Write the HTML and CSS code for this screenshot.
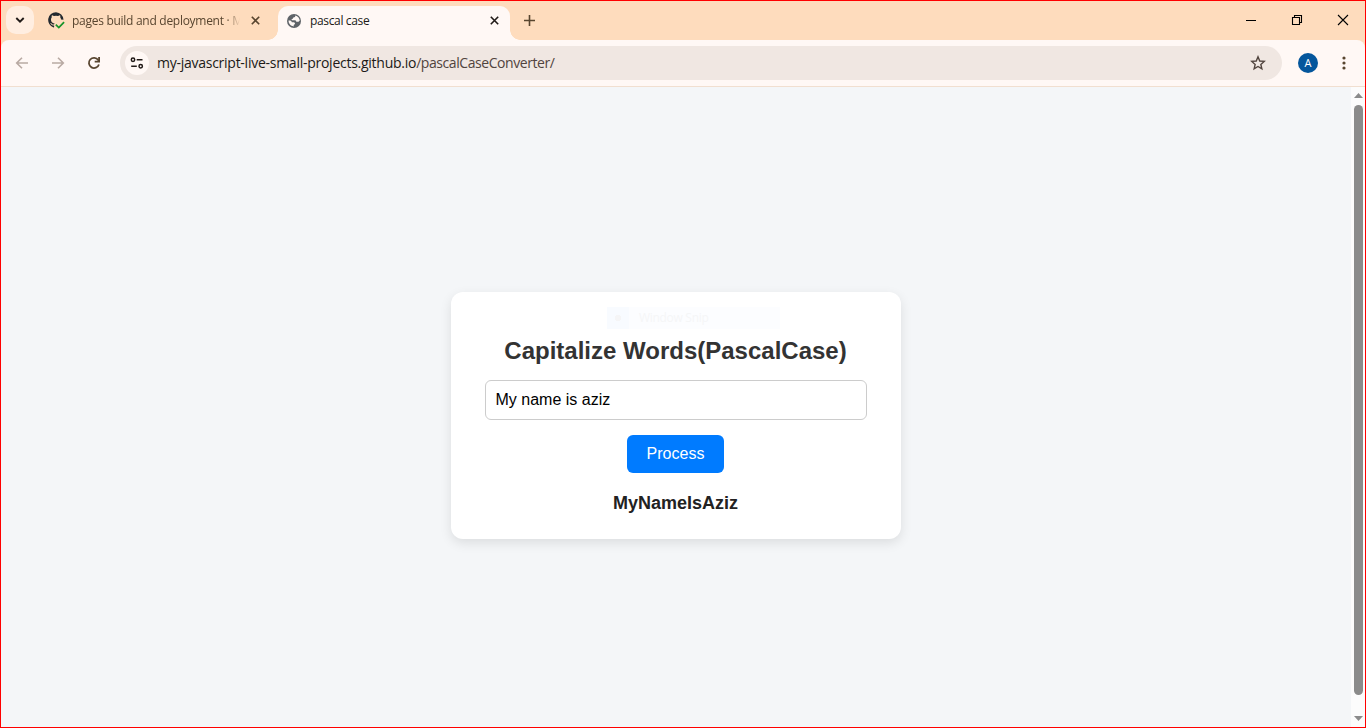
FILE: index.html
```html
<!DOCTYPE html>
<html lang="en">
<head>
<meta charset="utf-8">
<title>pascal case</title>
<link rel="stylesheet" href="styles.css">
</head>
<body>
<div class="window">
  <header class="tabstrip">
    <button class="tab-search" aria-label="Search tabs">
      <svg width="10" height="6" viewBox="0 0 10 6"><path d="M1.3 1 5 4.6 8.7 1" fill="none" stroke="#201a17" stroke-width="1.9"/></svg>
    </button>
    <div class="tab tab-idle">
      <svg class="favicon" width="17" height="17" viewBox="0 0 17 17">
        <path d="M8 .2a7.8 7.8 0 0 0-2.5 15.2c.4.1.6-.2.6-.4v-1.5c-2.200.5-2.700-.9-2.700-.9-.4-.9-.9-1.200-.9-1.200-.7-.5.1-.5.1-.5.8.1 1.200.8 1.200.8.7 1.200 1.900.9 2.300.7.1-.5.3-.9.5-1.100-1.700-.2-3.600-.9-3.600-3.900 0-.9.300-1.600.8-2.100-.1-.2-.3-1 .1-2.100 0 0 .7-.2 2.100.8a7.500 7.500 0 0 1 4 0c1.500-1 2.100-.8 2.100-.8.4 1.100.2 1.900.1 2.100.5.5.8 1.200.8 2.100l2.500.3A7.800 7.800 0 0 0 8 .2z" fill="#24292f"/>
        <path d="M7.800 12.600l3 3 5.300-5.500" fill="none" stroke="#159328" stroke-width="1.700"/>
      </svg>
      <span class="tab-title title-idle">pages build and deployment · M</span>
      <svg class="close" width="9" height="9" viewBox="0 0 9 9"><path d="M.8.8l7.400 7.400M8.200.8.800 8.200" stroke="#58452f" stroke-width="1.600"/></svg>
    </div>
    <div class="tab tab-active">
      <svg class="favicon" width="14" height="14" viewBox="0 0 14 14">
        <circle cx="7" cy="7" r="7" fill="#5f6368"/>
        <path d="M8.200 1.500C8.600 3 7.600 3.200 6.500 3.500c-.6.200-.3 1.300-1.300 1.500-1 .1-.7.900-.2 1.300h3.200c.9.1.6 1.300 1.400 1.500h1.200c.9 0 1.200-.8 1.900-.8.100-2.600-1.700-4.900-4.500-5.500zM1.500 6.600c0 3 2.200 5.600 5.200 5.800v-1.100c0-.8 1.300-.6 1.300-1.500 0-1.200-1-1.500-2-1.500H4.900C4.600 7 3.600 6.600 1.500 6.600z" fill="#fff8f5"/>
      </svg>
      <span class="tab-title title-active">pascal case</span>
      <svg class="close" width="9" height="9" viewBox="0 0 9 9"><path d="M.8.8l7.400 7.400M8.200.8.800 8.200" stroke="#201a17" stroke-width="1.600"/></svg>
    </div>
    <svg class="new-tab" width="11" height="11" viewBox="0 0 11 11"><path d="M5.500 0v11M0 5.500h11" stroke="#58452f" stroke-width="1.600"/></svg>
    <div class="controls">
      <svg width="46" height="38" viewBox="0 0 46 38"><path d="M18 19.500h10" stroke="#000"/></svg>
      <svg width="46" height="38" viewBox="0 0 46 38"><path d="M18.500 16.500h7v7h-7zM20.500 16.500v-2h7v7h-2" fill="none" stroke="#000" stroke-width="1.100"/></svg>
      <svg width="45" height="38" viewBox="0 0 45 38"><path d="M18 14l10 10M28 14 18 24" stroke="#000" stroke-width="1.100"/></svg>
    </div>
  </header>

  <nav class="toolbar">
    <svg class="nav-icon" width="16" height="16" viewBox="0 0 16 16"><path d="M14 8H3M8 2.700 2.700 8 8 13.300" fill="none" stroke="#b9aaa3" stroke-width="1.600"/></svg>
    <svg class="nav-icon" width="16" height="16" viewBox="0 0 16 16"><path d="M2 8h11M8 2.700 13.300 8 8 13.300" fill="none" stroke="#b9aaa3" stroke-width="1.600"/></svg>
    <svg class="nav-icon" width="16" height="16" viewBox="0 0 16 16"><path d="M12.900 9.400A5.100 5.100 0 1 1 12.200 5L13 6" fill="none" stroke="#58452f" stroke-width="1.800"/><path d="M14 2v5.400H8.700V5.700h3.500V2z" fill="#58452f"/></svg>
    <div class="omnibox">
      <span class="site-info">
        <svg width="14" height="12" viewBox="0 0 14 12" fill="none" stroke="#201a17" stroke-width="1.500"><circle cx="3" cy="2.800" r="1.700"/><path d="M6.700 2.800h5.800M1.200 9.200h5.600"/><circle cx="10.700" cy="9.200" r="1.700"/></svg>
      </span>
      <span class="url">my-javascript-live-small-projects.github.io<span class="path">/pascalCaseConverter/</span></span>
      <svg class="star" width="16" height="16" viewBox="0 0 16 16"><path d="M8 1.800l1.750 4.200 4.500.4-3.400 3 1 4.400L8 11.500l-3.850 2.300 1-4.400-3.400-3 4.500-.4z" fill="none" stroke="#51443e" stroke-width="1.400"/></svg>
    </div>
    <span class="avatar">A</span>
    <svg class="menu" width="4" height="14" viewBox="0 0 4 14" fill="#58452f"><circle cx="2" cy="2" r="1.600"/><circle cx="2" cy="7" r="1.600"/><circle cx="2" cy="12" r="1.600"/></svg>
  </nav>

  <div class="viewport">
    <main class="page">
      <section class="card">
        <div class="snip"><span class="snip-icon"></span><span class="snip-label">Window Snip</span></div>
        <h1 class="title">Capitalize Words(PascalCase)</h1>
        <input class="field" type="text" value="My name is aziz">
        <button class="process">Process</button>
        <p class="result">MyNameIsAziz</p>
      </section>
    </main>
    <div class="scrollbar">
      <svg width="9" height="5" viewBox="0 0 9 5"><path d="M0 5 4.500 0 9 5z" fill="#8b8b8b"/></svg>
      <div class="thumb"></div>
      <svg width="9" height="5" viewBox="0 0 9 5"><path d="M0 0l4.500 5L9 0z" fill="#8b8b8b"/></svg>
    </div>
  </div>
</div>
</body>
</html>
```
FILE: styles.css
```css
* { box-sizing: border-box; }
body { margin: 0; overflow: hidden; }
svg { display: block; flex: none; }
button { border: 0; padding: 0; }

.window {
  width: 1366px;
  height: 728px;
  border: 1px solid #f00;
  display: flex;
  flex-direction: column;
  background: #fedcbd;
  font-family: "Open Sans", "Noto Sans", sans-serif;
}

.tabstrip { height: 39px; flex: none; display: flex; align-items: flex-start; padding-left: 5px; }
.tab-search {
  width: 28px;
  height: 28px;
  margin-top: 5px;
  border-radius: 10px;
  background: #ffeee1;
  display: flex;
  align-items: center;
  justify-content: center;
}
.tab { display: flex; align-items: center; height: 34px; margin-top: 5px; padding-bottom: 5px; }
.tab-idle { width: 244px; padding-left: 14px; }
.tab-active {
  position: relative;
  width: 232px;
  padding-left: 9px;
  background: #fff8f5;
  border-radius: 10px 10px 0 0;
}
.tab-active::before,
.tab-active::after {
  content: "";
  position: absolute;
  bottom: 0;
  width: 10px;
  height: 10px;
}
.tab-active::before { left: -10px; background: radial-gradient(circle at 0 0, transparent 9.500px, #fff8f5 10px); }
.tab-active::after { right: -10px; background: radial-gradient(circle at 100% 0, transparent 9.500px, #fff8f5 10px); }
.tab-title { font-size: 12px; line-height: 18px; white-space: nowrap; overflow: hidden; padding-top: 1px; }
.title-idle {
  width: 169px;
  margin-left: 7px;
  color: #58452f;
  letter-spacing: -0.28px;
  -webkit-mask-image: linear-gradient(90deg, #000 154px, transparent 168px);
  mask-image: linear-gradient(90deg, #000 154px, transparent 168px);
}
.title-active { width: 180px; margin-left: 9px; color: #201a17; letter-spacing: -0.35px; }
.tab-idle .close { margin-left: 10px; }
.tab-active .close { margin-left: 0; }
.new-tab { margin: 14px 0 0 14px; }
.controls { display: flex; margin-left: auto; }

.toolbar {
  height: 47px;
  flex: none;
  display: flex;
  align-items: center;
  padding: 0 19px 0 13px;
  background: #fff8f5;
  border-bottom: 1px solid #f1dfd0;
  border-radius: 8px 8px 0 0;
}
.nav-icon { margin-right: 20px; }
.omnibox {
  width: 1162px;
  height: 34px;
  margin-left: -2px;
  padding: 0 16px 0 5px;
  border-radius: 17px;
  background: #f0e7e2;
  display: flex;
  align-items: center;
}
.site-info {
  width: 24px;
  height: 24px;
  border-radius: 50%;
  background: #fff8f5;
  display: flex;
  align-items: center;
  justify-content: center;
}
.url { margin-left: 8px; font-size: 14px; line-height: 20px; letter-spacing: -0.26px; color: #201a17; white-space: nowrap; }
.path { color: #51443e; letter-spacing: -0.43px; }
.star { margin-left: auto; }
.avatar {
  width: 20px;
  height: 20px;
  margin-left: 16px;
  border-radius: 50%;
  background: #04569c;
  color: #fff;
  font-size: 11px;
  line-height: 20px;
  text-align: center;
}
.menu { margin-left: auto; }

.viewport { flex: 1; display: flex; min-height: 0; }
.page {
  flex: 1;
  display: flex;
  align-items: flex-start;
  justify-content: center;
  padding-top: 205px;
  background: #f4f6f8;
  font-family: "Liberation Sans", Arial, sans-serif;
}
.card {
  position: relative;
  width: 450px;
  height: 247px;
  padding: 45px 35px 0 34px;
  border-radius: 12px;
  background: #fff;
  box-shadow: 0 4px 12px rgba(0, 0, 0, 0.1);
  display: flex;
  flex-direction: column;
  align-items: center;
}
.title { margin: 0; font-size: 24px; line-height: 28px; color: #333; white-space: nowrap; }
.field {
  width: 382px;
  height: 40px;
  flex: none;
  align-self: flex-start;
  margin-top: 15px;
  padding: 0 9.500px;
  border: 1px solid #ccc;
  border-radius: 6px;
  background: #fff;
  color: #000;
  font: 16px "Liberation Sans", Arial, sans-serif;
}
.process {
  width: 97px;
  height: 38px;
  margin-top: 15px;
  border-radius: 6px;
  background: #007bff;
  color: #fff;
  font: 16px "Liberation Sans", Arial, sans-serif;
}
.result { margin: 20px 0 0; font-size: 18px; line-height: 20px; font-weight: bold; color: #222; }

.snip {
  position: absolute;
  left: 156px;
  top: 15px;
  width: 173px;
  height: 22px;
  display: flex;
  background: #fcfdff;
}
.snip-icon { width: 22px; background: radial-gradient(circle at 11px 11px, #f5f5f6 3px, #f8fbff 3.500px); }
.snip-label { margin-left: 10px; font: 12px/22px "Open Sans", sans-serif; letter-spacing: -0.3px; color: #f5f6f7; }

.scrollbar {
  width: 14px;
  background: #fcfcfc;
  display: flex;
  flex-direction: column;
  align-items: center;
  padding: 6px 0 6px;
}
.thumb { flex: 1; width: 9px; margin: 7px 0 21px; border-radius: 5px; background: #8b8b8b; }
```
